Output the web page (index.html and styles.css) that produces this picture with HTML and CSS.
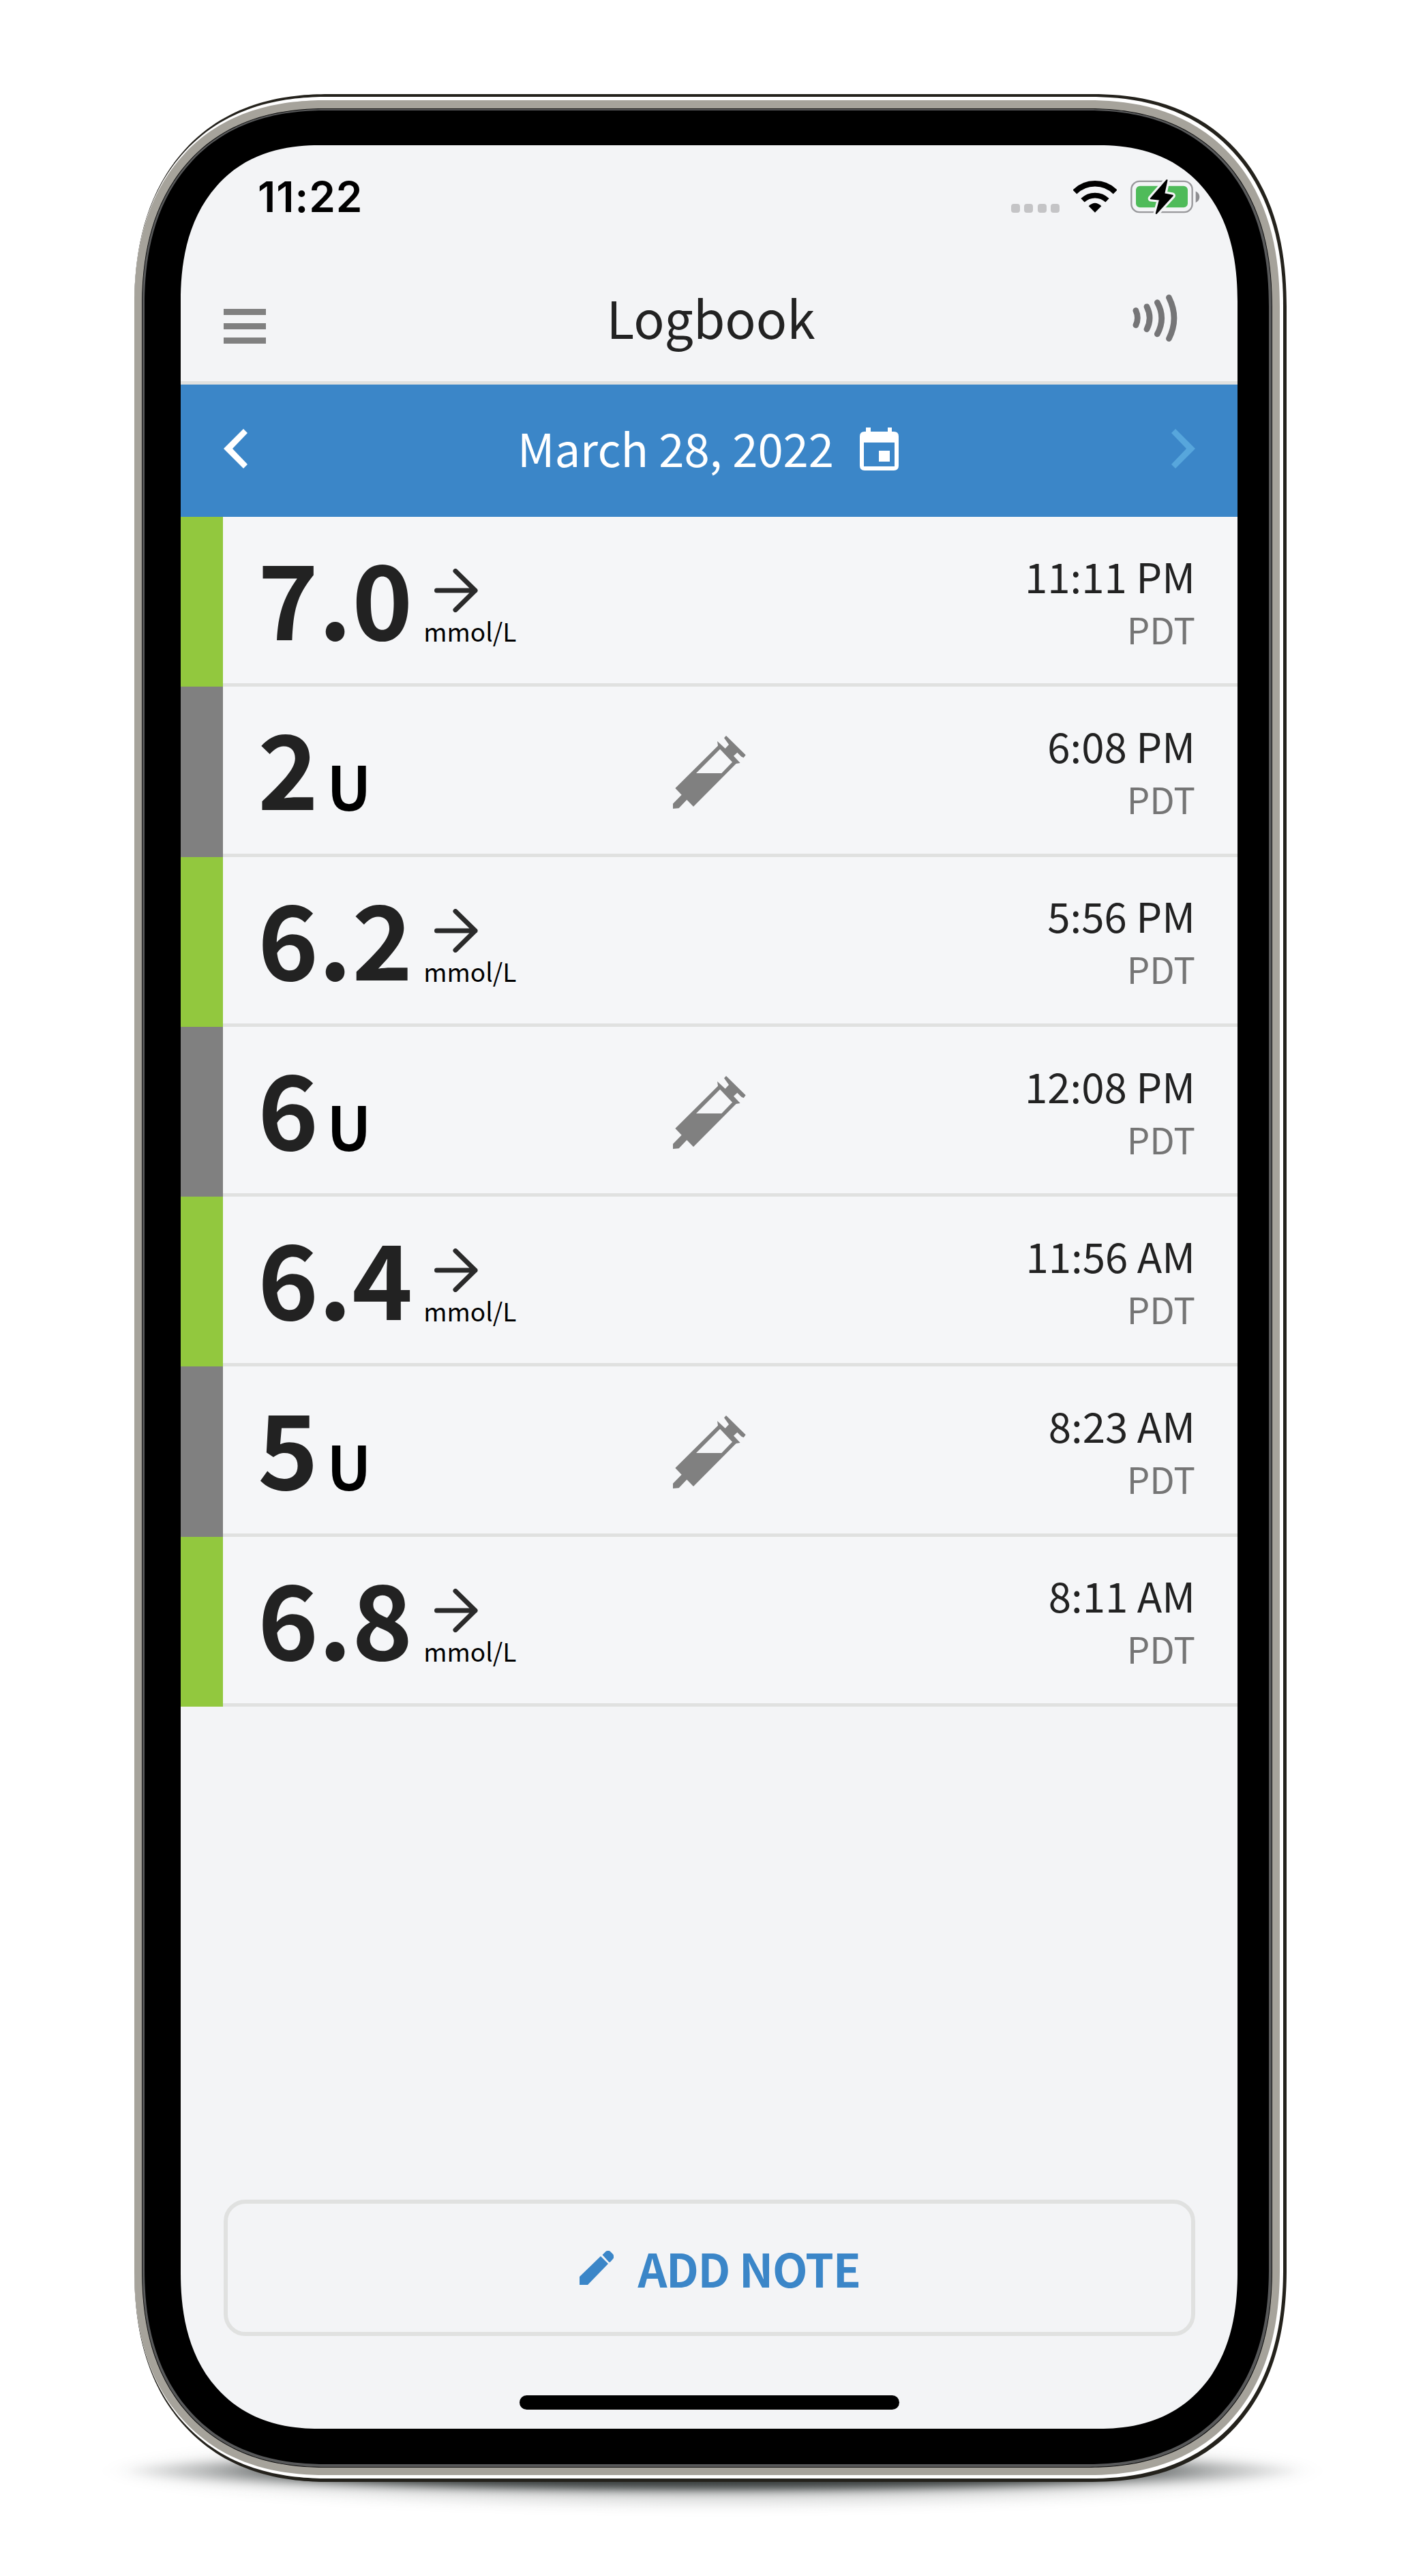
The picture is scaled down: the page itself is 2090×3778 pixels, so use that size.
FILE: index.html
```html
<!DOCTYPE html>
<html lang="en">
<head>
    <meta charset="UTF-8">
    <meta name="viewport" content="width=device-width, initial-scale=1.0">
    <title>Logbook</title>
    <link rel="stylesheet" href="styles.css">
</head>
<body>
    <!-- shared icons -->
    <svg class="sprite" width="0" height="0">
        <symbol id="arrow" viewBox="0 0 64 64">
            <path d="M3.5 32H60M31 3.5L60 32L31 60.5" fill="none" stroke="#2a2a2a" stroke-width="7" stroke-linecap="round" stroke-linejoin="round"/>
        </symbol>
        <symbol id="syringe" viewBox="262 236 321 321">
            <path fill="#808080" fill-rule="evenodd" d="M496 236L582 321L573 333L563 328L545 310L529 325L558 356L540 359L352 548L323 518L288 555L262 557V535L300 496L272 467L460 280L457 260L492 292L508 275L487 246ZM469 295L364 401H476L523 352Z"/>
        </symbol>
    </svg>

    <div class="stage">
        <div class="shadow"></div>
        <div class="phone">
            <div class="shine">
                <div class="frame">
                    <div class="rim">
                        <div class="bezel">
                            <main class="screen">
                                <div class="status-bar">
                                    <span class="clock">11:22</span>
                                    <div class="status-icons">
                                        <div class="dots"><i></i><i></i><i></i><i></i></div>
                                        <svg class="wifi" viewBox="402 434 192 140">
                                            <path d="M409 483A126 126 0 0 1 587 483" fill="none" stroke="#000" stroke-width="25"/>
                                            <path d="M444 520A78 78 0 0 1 552 520" fill="none" stroke="#000" stroke-width="23"/>
                                            <path d="M470 545Q498 518 526 545L498 574Z"/>
                                        </svg>
                                        <svg class="battery" viewBox="655 430 306 152">
                                            <rect x="659" y="438" width="268" height="136" rx="36" fill="none" stroke="#98989b" stroke-width="7"/>
                                            <rect x="679" y="459" width="228" height="94" rx="18" fill="#4fbb5a"/>
                                            <path d="M942 482Q959 490 959 507T942 532Z" fill="#8e8e91"/>
                                            <path d="M815 434L745 514L785 518L769 579L840 501L802 494Z" fill="#000" stroke="#f3f4f6" stroke-width="26" stroke-linejoin="round"/>
                                            <path d="M815 434L745 514L785 518L769 579L840 501L802 494Z" fill="#000" stroke="#000" stroke-width="7" stroke-linejoin="round"/>
                                        </svg>
                                    </div>
                                </div>

                                <header class="header">
                                    <div class="menu"><i></i><i></i><i></i></div>
                                    <h1>Logbook</h1>
                                    <svg class="scan" viewBox="666 935 196 206">
                                        <path d="M680 1005Q695 1037 680 1069M728 988Q753 1037 728 1087M774 970Q812 1038 774 1108M825 948Q870 1038 825 1128" fill="none" stroke="#757577" stroke-width="26" stroke-linecap="round"/>
                                    </svg>
                                </header>

                                <nav class="date-bar">
                                    <svg class="chevron" viewBox="0 0 35 58"><path d="M0 29L29 0L35 6L13 29L35 52L29 58Z" fill="#fff"/></svg>
                                    <div class="date">
                                        <span>March 28, 2022</span>
                                        <svg class="calendar" viewBox="0 0 57 63">
                                            <path fill="#fff" fill-rule="evenodd" d="M9 0H16V6H41V0H47V6H50Q57 6 57 13V56Q57 63 50 63H7Q0 63 0 56V13Q0 6 7 6H9ZM6 22V57H51V22Z"/>
                                            <rect x="28" y="34" width="16" height="16" fill="#fff"/>
                                        </svg>
                                    </div>
                                    <svg class="chevron" viewBox="0 0 35 58"><path d="M35 29L6 0L0 6L22 29L0 52L6 58Z" fill="#57a6dc"/></svg>
                                </nav>

                                <ul class="log">
                                    <li class="entry glucose">
                                        <span class="value">7.0</span>
                                        <div class="trend"><svg><use href="#arrow"/></svg><span>mmol/L</span></div>
                                        <div class="time"><b>11:11 PM</b><span>PDT</span></div>
                                    </li>
                                    <li class="entry insulin">
                                        <span class="value">2</span>
                                        <span class="unit">U</span>
                                        <svg class="syringe"><use href="#syringe"/></svg>
                                        <div class="time"><b>6:08 PM</b><span>PDT</span></div>
                                    </li>
                                    <li class="entry glucose">
                                        <span class="value">6.2</span>
                                        <div class="trend"><svg><use href="#arrow"/></svg><span>mmol/L</span></div>
                                        <div class="time"><b>5:56 PM</b><span>PDT</span></div>
                                    </li>
                                    <li class="entry insulin">
                                        <span class="value">6</span>
                                        <span class="unit">U</span>
                                        <svg class="syringe"><use href="#syringe"/></svg>
                                        <div class="time"><b>12:08 PM</b><span>PDT</span></div>
                                    </li>
                                    <li class="entry glucose">
                                        <span class="value">6.4</span>
                                        <div class="trend"><svg><use href="#arrow"/></svg><span>mmol/L</span></div>
                                        <div class="time"><b>11:56 AM</b><span>PDT</span></div>
                                    </li>
                                    <li class="entry insulin">
                                        <span class="value">5</span>
                                        <span class="unit">U</span>
                                        <svg class="syringe"><use href="#syringe"/></svg>
                                        <div class="time"><b>8:23 AM</b><span>PDT</span></div>
                                    </li>
                                    <li class="entry glucose">
                                        <span class="value">6.8</span>
                                        <div class="trend"><svg><use href="#arrow"/></svg><span>mmol/L</span></div>
                                        <div class="time"><b>8:11 AM</b><span>PDT</span></div>
                                    </li>
                                </ul>

                                <button class="add-note">
                                    <svg viewBox="0 0 50 50"><path fill="#3b86c8" d="M0 38L31 8L42 19L12 50H0ZM33.500 6L39 0.500Q40 0 41 0H43Q44 0 45 1L49 5Q50 6 50 8V10Q50 11 49 12L45 16.500Q44 17 43 16.500Z"/></svg>
                                    <span>ADD NOTE</span>
                                </button>
                                <div class="home-indicator"></div>
                            </main>
                        </div>
                    </div>
                </div>
            </div>
        </div>
    </div>
</body>
</html>
```
FILE: styles.css
```css
:root {
    --blue: #3b86c8;
    --green: #92c83e;
    --grey: #808080;
    --line: #e0e1e0;
    --screen: #f3f4f6;
    --text: #222;
}

* {
    box-sizing: border-box;
    margin: 0;
    padding: 0;
}

body {
    font-family: "Noto Sans CJK SC", "Noto Sans", sans-serif;
    background: #fff;
    color: var(--text);
}

.sprite {
    position: absolute;
}

svg {
    display: block;
    flex: none;
}

.stage {
    position: relative;
    width: 2090px;
    height: 3778px;
    padding: 138px 203px 138px 197px;
}

.shadow {
    position: absolute;
    left: 140px;
    top: 3560px;
    width: 1820px;
    height: 130px;
    background:
        radial-gradient(870px 34px at 905px 64px, rgba(20, 26, 26, 0.8) 65%, rgba(20, 26, 26, 0.25) 86%, transparent),
        radial-gradient(900px 60px at 905px 64px, rgba(20, 26, 26, 0.2) 50%, rgba(20, 26, 26, 0.08) 80%, transparent);
    filter: blur(6px);
}

/* phone body, from the outer edge inwards */
.phone {
    position: relative;
    height: 3502px;
    padding: 4px 5px 5px 0;
    border-radius: 255px / 280px;
    background: #24221c;
}

.shine {
    height: 100%;
    padding: 5px 5px 5px 0;
    border-radius: 254px / 276px;
    background: #fff;
}

.frame {
    height: 100%;
    padding: 12px 11px 11px 11px;
    border-radius: 252px / 272px;
    background: #a6a39b;
}

.rim {
    height: 100%;
    padding: 3px 5px 5px 4px;
    border-radius: 241px / 260px;
    border: 1px solid #111;
    background: #58595a;
}

.bezel {
    height: calc(100% + 2px);
    margin: -1px;
    padding: 51px 46px 52px 53px;
    border-radius: 238px / 257px;
    background: #000;
}

.screen {
    display: flex;
    flex-direction: column;
    height: 100%;
    overflow: hidden;
    border-radius: 185px / 203px;
    background: var(--screen);
}

/* smoother corners where the browser can draw them */
@supports (corner-shape: superellipse(1.2)) {
    .phone, .shine, .frame, .rim, .bezel, .screen {
        corner-shape: superellipse(1.2);
    }
    .phone { border-radius: 285px / 312px; }
    .shine { border-radius: 284px / 308px; }
    .frame { border-radius: 281px / 303px; }
    .rim { border-radius: 270px / 291px; }
    .bezel { border-radius: 266px / 287px; }
    .screen { border-radius: 203px / 229px; }
}

.status-bar {
    display: flex;
    justify-content: space-between;
    height: 150px;
    padding: 52px 55px 0 113px;
}

.clock {
    font: 600 62px/48px Inter, sans-serif;
    letter-spacing: 1px;
    color: #000;
}

.status-icons {
    display: flex;
    height: 48px;
}

.dots {
    display: flex;
    align-items: flex-end;
    gap: 6.5px;
    padding-bottom: 1px;
}

.dots i {
    width: 13px;
    height: 13px;
    border-radius: 4px;
    background: #c4c4c6;
}

.wifi {
    width: 64px;
    height: 47px;
    margin-left: 20px;
}

.battery {
    width: 102px;
    height: 51px;
    margin: -2px 0 0 20px;
}

.header {
    display: flex;
    justify-content: space-between;
    align-items: center;
    height: 201px;
    padding: 0 88px 0 63px;
    border-bottom: 5px solid var(--line);
}

.header h1 {
    margin: 7px 0 0 34px;
    font-size: 75px;
    font-weight: 400;
    line-height: 100px;
}

.menu {
    display: flex;
    flex-direction: column;
    gap: 12px;
    width: 62px;
    margin-top: 35px;
}

.menu i {
    height: 9px;
    background: var(--grey);
}

.scan {
    width: 66px;
    height: 69px;
    margin-top: 10px;
}

.date-bar {
    display: flex;
    justify-content: space-between;
    align-items: center;
    height: 194px;
    padding: 0 62px 6px 63px;
    background: var(--blue);
    color: #fff;
}

.chevron {
    width: 35px;
    height: 58px;
}

.date {
    display: flex;
    align-items: center;
    gap: 38px;
    margin: -4px 4px 0 0;
    font-size: 67px;
    line-height: 90px;
}

.calendar {
    width: 57px;
    height: 63px;
    margin-top: 4px;
}

.log {
    list-style: none;
}

.entry {
    position: relative;
    display: flex;
    align-items: baseline;
    height: 249.3px;
    padding: 0 62px 0 51px;
    border-left: 62.5px solid;
    background: linear-gradient(var(--line), var(--line)) bottom / 100% 5px no-repeat #f5f6f8;
}

.glucose {
    border-left-color: var(--green);
}

.insulin {
    border-left-color: var(--grey);
}

.value {
    font-size: 151px;
    font-weight: 700;
    line-height: 231px;
}

.trend {
    display: flex;
    flex-direction: column;
    align-self: flex-start;
    margin: 76px 0 0 16px;
    color: #000;
    font-size: 37px;
    line-height: 50px;
}

.trend svg {
    width: 64px;
    height: 64px;
    margin: 0 0 2px 16px;
}

.unit {
    margin-left: 13px;
    color: #000;
    font-size: 87px;
    font-weight: 500;
    -webkit-text-stroke: 2px #000;
}

.syringe {
    position: absolute;
    left: 660px;
    top: 72px;
    width: 107px;
    height: 107px;
}

.time {
    display: flex;
    flex-direction: column;
    align-self: center;
    align-items: flex-end;
    margin-left: auto;
    line-height: 78px;
}

.time b {
    font-size: 60px;
    font-weight: 400;
}

.time span {
    color: #757575;
    font-size: 53px;
}

.add-note {
    display: flex;
    justify-content: center;
    align-items: center;
    gap: 35px;
    height: 200px;
    margin: auto 62px 87px 63px;
    padding-left: 31px;
    border: 6px solid var(--line);
    border-radius: 32px;
    background: none;
    color: var(--blue);
    font: 700 67px/90px "Noto Sans CJK SC", sans-serif;
    letter-spacing: -1.3px;
}

.add-note svg {
    width: 50px;
    height: 50px;
}

.home-indicator {
    width: 557px;
    height: 21px;
    margin: 0 auto 28px;
    border-radius: 11px;
    background: #000;
}
```
